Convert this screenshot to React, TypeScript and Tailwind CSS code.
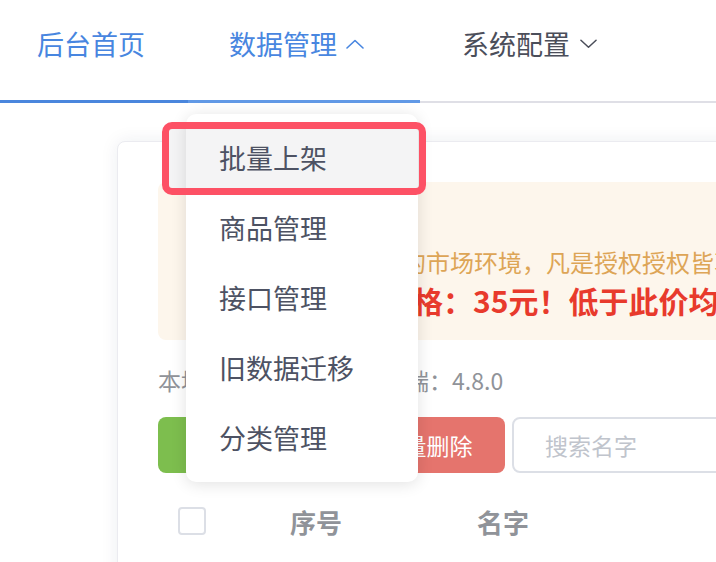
import React from 'react';

const ChevronUp: React.FC<{ className?: string }> = ({ className }) => (
  <svg viewBox="0 0 18 10" className={className} fill="none" stroke="currentColor" strokeWidth="1.6" strokeLinecap="round" strokeLinejoin="round">
    <path d="M1 9L9 1.5L17 9" />
  </svg>
);

const ChevronDown: React.FC<{ className?: string }> = ({ className }) => (
  <svg viewBox="0 0 18 10" className={className} fill="none" stroke="currentColor" strokeWidth="1.6" strokeLinecap="round" strokeLinejoin="round">
    <path d="M1 1L9 8.5L17 1" />
  </svg>
);

const menuItems = ['批量上架', '商品管理', '接口管理', '旧数据迁移', '分类管理'];

const App: React.FC = () => {
  return (
    <div className="relative w-[716px] h-[562px] overflow-hidden bg-white font-['Noto_Sans_CJK_SC',sans-serif]">
      {/* 顶部导航 */}
      <div className="flex h-[103px] border-b-2 border-[#dfdfe6] text-[27px] leading-[34px]">
        <div className="h-[103px] w-[188px] shrink-0 border-b-[3px] border-[#4a86dd] pl-[37px] pt-[27px] text-[#4886e0]">
          后台首页
        </div>
        <div className="flex h-[103px] w-[232px] shrink-0 items-start border-b-[3px] border-[#6199e6] pl-[41px] pt-[27px] text-[#4886e0]">
          <span>数据管理</span>
          <ChevronUp className="ml-[9px] mt-[12px] h-[10px] w-[18px]" />
        </div>
        <div className="flex h-[101px] shrink-0 items-start pl-[42px] pt-[27px] text-[#4b4e5a]">
          <span>系统配置</span>
          <ChevronDown className="ml-[10px] mt-[12px] h-[10px] w-[17px]" />
        </div>
      </div>

      {/* 内容卡片 */}
      <div className="ml-[117px] mt-[38px] h-[460px] w-[680px] rounded-[8px] border border-[#ebebf0] bg-white px-[40px] pt-[40px] shadow-[0_0_18px_rgba(30,40,80,0.08)]">
        <div className="rounded-[8px] bg-[#fdf6ec] pl-[52px] pt-[21px] pb-[20px] whitespace-nowrap">
          <div className="text-[24px] leading-[39px] text-[#dda556]">温馨提示</div>
          <div className="text-[24px] leading-[39px] text-[#dda556]">为了维护一个良好的市场环境，凡是授权授权皆享受后续更新服务</div>
          <div className="-ml-[7px] text-[30px] font-bold leading-[39px] text-[#e83a2c]">软件授权最低价格：35元！低于此价均为盗版</div>
        </div>

        <div className="mt-[25px] flex whitespace-nowrap text-[23px] leading-[30px] text-[#909399]">
          <span>本地版本：4.8.0</span>
          <span className="ml-[36px]">服务端：4.8.0</span>
        </div>

        <div className="mt-[22px] flex h-[56px] items-stretch gap-[20px] whitespace-nowrap text-[23px]">
          <button className="w-[170px] shrink-0 rounded-[8px] bg-[#7dbe4e] text-white">批量上架</button>
          <button className="w-[157px] shrink-0 rounded-[8px] bg-[#e5746d] text-white">批量删除</button>
          <div className="-ml-[13px] flex w-[260px] shrink-0 items-center rounded-[8px] border-2 border-[#dcdfe6] pl-[31px] text-[#c0c4cc]">
            搜索名字
          </div>
        </div>

        <div className="mt-[20px] flex h-[56px] items-center whitespace-nowrap text-[26px] font-semibold text-[#909399]">
          <span className="ml-[20px] h-[28px] w-[28px] shrink-0 rounded-[4px] border-2 border-[#dcdfe6] bg-white" />
          <span className="ml-[84px]">序号</span>
          <span className="ml-[135px]">名字</span>
        </div>
      </div>

      {/* 标注底色 */}
      <div className="absolute left-[169px] top-[129px] z-10 h-[59px] w-[250px] bg-[#f4f4f5]" />

      {/* 下拉菜单 */}
      <div className="absolute left-[186px] top-[114px] z-20 w-[232px] rounded-[10px] bg-white py-[9px] shadow-[0_2px_16px_rgba(0,0,0,0.12)]">
        {menuItems.map((item, i) => (
          <div
            key={item}
            className={`flex h-[70px] items-center pl-[33px] text-[27px] text-[#4d5263] ${i === 0 ? 'bg-[#f4f4f5]' : ''}`}
          >
            {item}
          </div>
        ))}
      </div>

      {/* 红色标注框 */}
      <div className="absolute left-[162px] top-[122px] z-30 h-[73px] w-[264px] rounded-[10px] border-[7px] border-[#fd5165]" />
    </div>
  );
};

export default App;
